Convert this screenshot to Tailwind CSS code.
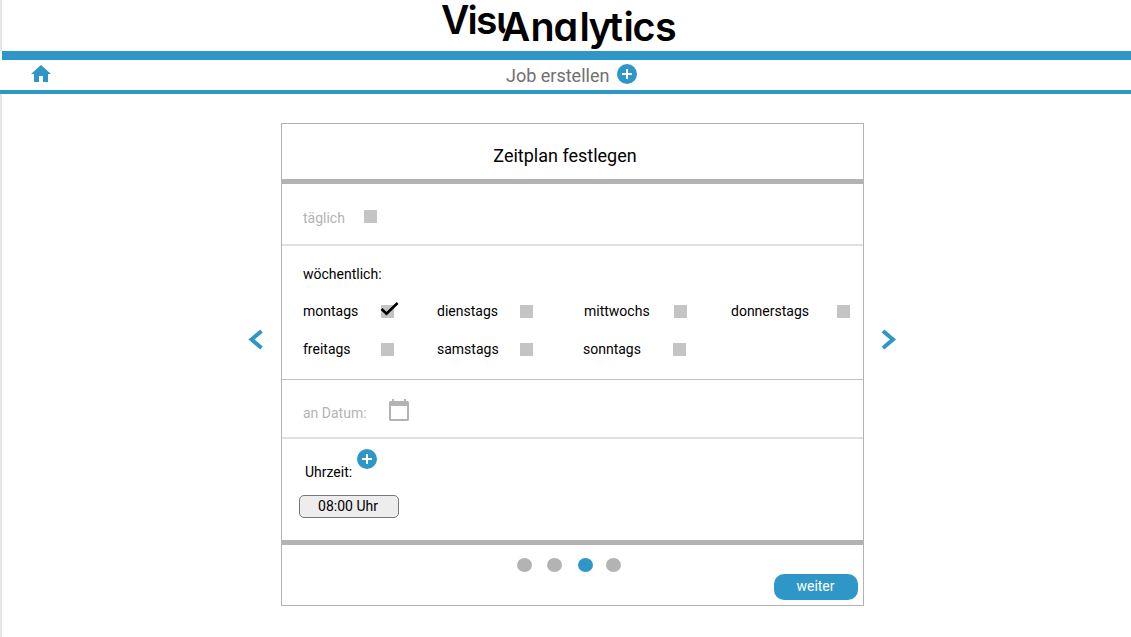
<!DOCTYPE html>
<html lang="de">
<head>
<meta charset="utf-8">
<title>VisuAnalytics</title>
<script src="https://cdn.jsdelivr.net/npm/@tailwindcss/browser@4"></script>
</head>
<body class="h-[637px] w-[1131px] overflow-hidden bg-white font-[Roboto,sans-serif] text-black">
<div class="flex h-full flex-col">
  <header class="flex h-[51px] shrink-0 border-l-2 border-[#e5e5e5]">
    <svg class="ml-[436px] h-[51px] w-[240px] overflow-visible" viewBox="438 0 240 51" font-family="Inter, sans-serif" font-weight="600" style="font-feature-settings:'cv11'">
      <clipPath id="u"><path d="M436 -10H514L512 14L503 36V45H436Z"/></clipPath>
      <text clip-path="url(#u)" x="441 467.500 476 496" y="33.500" font-size="39">Visu</text>
      <text x="501.500 530.500 553.500 579.500 588.500 609 623.500 632.500 655" y="41" font-size="39.500">Analytics</text>
    </svg>
  </header>
  <nav class="ml-[2px] flex h-[39px] shrink-0 items-center border-t-[9px] border-[#2e97c7] pl-[27px]">
    <svg class="-mt-[3px] size-6 shrink-0" viewBox="0 0 24 24" fill="#2e97c7"><path d="M10 20v-6h4v6h5v-8h3L12 3 2 12h3v8z"/></svg>
    <h1 class="mt-[2px] ml-[453px] text-[18px] leading-6 text-[#707070]"><span class="inline-block w-[105px]">Job erstellen</span></h1>
    <svg class="ml-[4px] -mt-[3px] size-6" viewBox="0 0 24 24"><circle cx="12" cy="12" r="10" fill="#2e97c7"/><path d="M12 7v10M7 12h10" stroke="#fff" stroke-width="2"/></svg>
  </nav>
  <div class="h-1 shrink-0 bg-[#2e97c7]"></div>
  <main class="flex min-h-0 flex-1 items-start border-l-2 border-[#e5e5e5] pt-[29px]">
    <svg class="mt-[206px] ml-[246px] h-[22px] w-[16px] shrink-0" viewBox="0 0 16 22" fill="none" stroke="#2e97c7" stroke-width="4"><path d="M13.500 2 3.500 10.500 13.500 19"/></svg>
    <section class="ml-[17px] flex h-[483px] w-[583px] shrink-0 flex-col border border-[#b3b3b3] text-sm leading-5">
      <h2 class="flex h-[60px] shrink-0 justify-center border-b-[5px] border-[#b3b3b3] pt-5 pr-[15px] text-[18px] leading-6">Zeitplan festlegen</h2>
      <div class="flex h-[62px] shrink-0 border-b-2 border-[#e0e0e0] pl-[21px] text-[#b3b3b3]">
        <span class="mt-6 w-[61px]">täglich</span><i class="mt-[26px] size-[13px] bg-[#c4c4c4]"></i>
      </div>
      <div class="h-[134px] shrink-0 border-b border-[#c0c0c0] pt-[18px] pl-[21px]">
        <p>wöchentlich:</p>
        <div class="mt-[17px] flex items-center">
          <span class="w-[78px]">montags</span>
          <i class="relative size-[13px] bg-[#c4c4c4]"><svg class="absolute -top-[5px] -left-[2px] h-[18px] w-[22px]" viewBox="0 0 22 18" fill="none" stroke="#000" stroke-width="2.6"><path d="M2.500 9 7.500 13.800 18.600 3"/></svg></i>
          <span class="ml-[43px] w-[83px]">dienstags</span><i class="size-[13px] bg-[#c4c4c4]"></i>
          <span class="ml-[51px] w-[90px]">mittwochs</span><i class="size-[13px] bg-[#c4c4c4]"></i>
          <span class="ml-[44px] w-[106px]">donnerstags</span><i class="size-[13px] bg-[#c4c4c4]"></i>
        </div>
        <div class="mt-[18px] flex items-center">
          <span class="w-[78px]">freitags</span><i class="size-[13px] bg-[#c4c4c4]"></i>
          <span class="ml-[43px] w-[83px]">samstags</span><i class="size-[13px] bg-[#c4c4c4]"></i>
          <span class="ml-[50px] w-[90px]">sonntags</span><i class="size-[13px] bg-[#c4c4c4]"></i>
        </div>
      </div>
      <div class="flex h-[59px] shrink-0 border-b-2 border-[#e0e0e0] pl-[21px] text-[#b3b3b3]">
        <span class="mt-[23px] w-[86px]">an Datum:</span>
        <svg class="mt-[18px] h-[24px] w-[20px]" viewBox="0 0 20 24"><path fill="#b3b3b3" fill-rule="evenodd" d="M3 1h2v2h10V1h2v2h1.500a1.500 1.500 0 0 1 1.500 1.500v17a1.500 1.500 0 0 1-1.500 1.500h-17A1.500 1.500 0 0 1 0 21.500v-17A1.500 1.500 0 0 1 1.500 3H3zM2 8v13h16V8z"/></svg>
      </div>
      <div class="h-[106px] shrink-0 border-b-[5px] border-[#b3b3b3] pt-[8px] pl-[17px]">
        <div class="flex items-start"><span class="mt-[15px] w-[49px] pl-[6px]">Uhrzeit:</span>
          <svg class="ml-[7px] size-6" viewBox="0 0 24 24"><circle cx="12" cy="12" r="10" fill="#2e97c7"/><path d="M12 7v10M7 12h10" stroke="#fff" stroke-width="2"/></svg></div>
        <div class="mt-[13px] flex h-[23px] w-[100px] items-center justify-center rounded-[5px] border border-[#777] bg-[#ededed] pr-[2px] pb-[2px]">08:00 Uhr</div>
      </div>
      <footer class="flex flex-1 items-start pl-[234.5px]">
        <i class="mt-[13px] h-[14px] w-[15px] rounded-[50%] bg-[#b3b3b3]"></i>
        <i class="mt-[13px] ml-[15.5px] h-[14px] w-[15px] rounded-[50%] bg-[#b3b3b3]"></i>
        <i class="mt-[13px] ml-[15.500px] h-[14px] w-[15px] rounded-[50%] bg-[#2e97c7]"></i>
        <i class="mt-[13px] ml-[13.500px] h-[14px] w-[15px] rounded-[50%] bg-[#b3b3b3]"></i>
        <button class="mt-[29px] ml-[153px] h-[26px] w-[84px] rounded-[10px] bg-[#2e97c7] pr-px pb-[2px] text-white">weiter</button>
      </footer>
    </section>
    <svg class="mt-[206px] ml-[17px] h-[22px] w-[16px] shrink-0" viewBox="0 0 16 22" fill="none" stroke="#2e97c7" stroke-width="4"><path d="M2 2 12 10.500 2 19"/></svg>
  </main>
</div>
</body>
</html>
